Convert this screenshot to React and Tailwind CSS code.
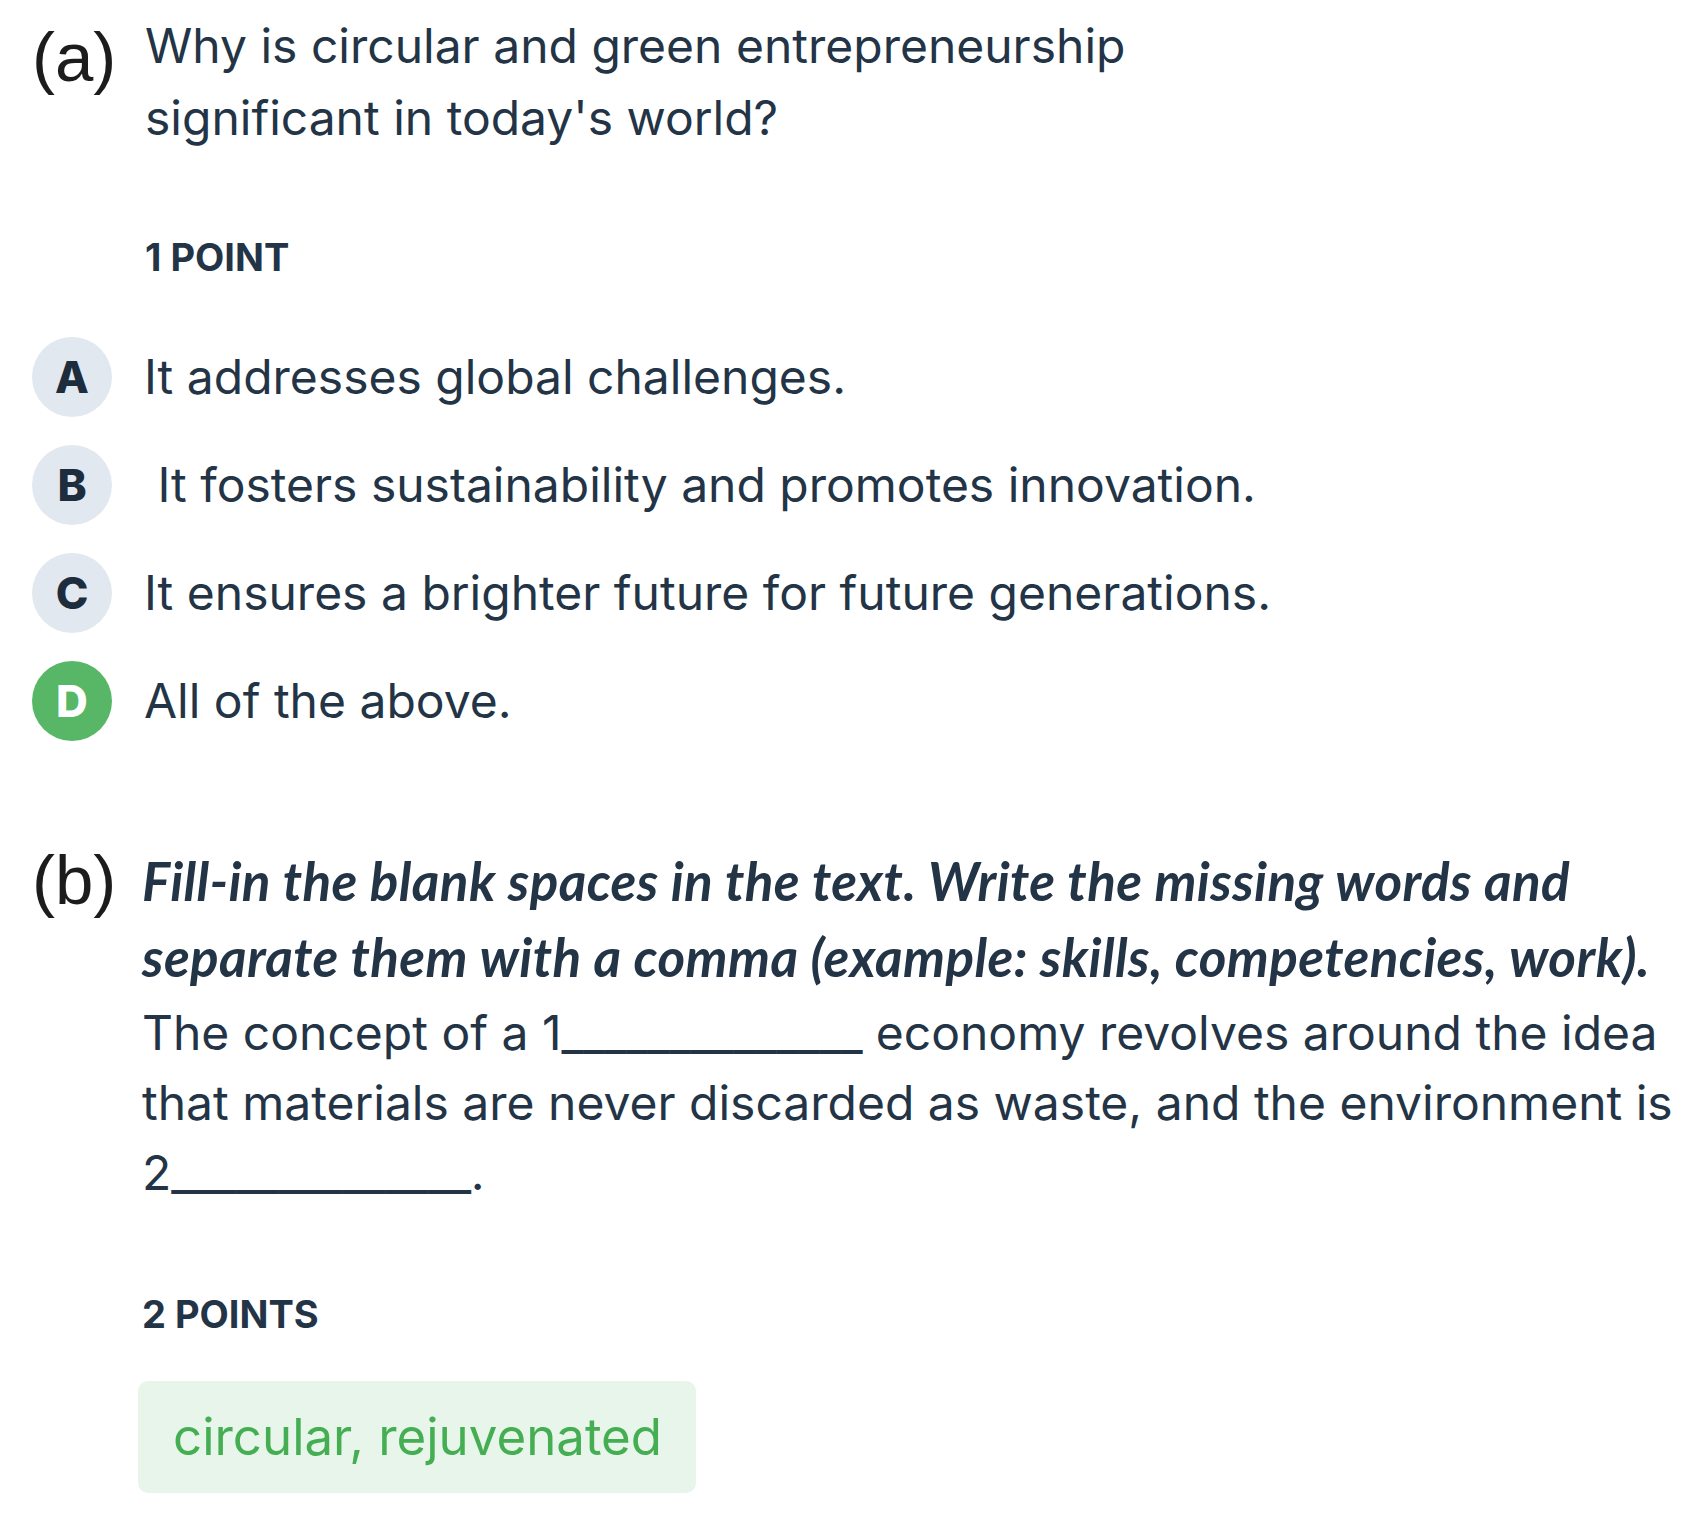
const inter = { fontFamily: 'Inter, "Noto Sans", sans-serif' };

const options = [
  { letter: 'A', text: 'It addresses global challenges.' },
  { letter: 'B', text: '\u00a0It fosters sustainability and promotes innovation.' },
  { letter: 'C', text: 'It ensures a brighter future for future generations.' },
  { letter: 'D', text: 'All of the above.', correct: true },
];

function Label({ children }) {
  return (
    <div className="font-['Liberation_Sans',Arial,sans-serif] text-[69px] leading-none text-[#1c1c1c]">
      {children}
    </div>
  );
}

export default function App() {
  return (
    <div className="min-h-screen bg-white px-[32px] text-[#233446]" style={inter}>
      {/* (a) multiple choice */}
      <div className="flex items-start pt-[10px]">
        <div className="mt-[13px] w-[113px] shrink-0">
          <Label>(a)</Label>
        </div>
        <div className="text-[48px] leading-[72px]">
          Why is circular and green entrepreneurship
          <br />
          significant in today's world?
        </div>
      </div>

      <div className="mt-[81px] pl-[113px] text-[38px] font-bold leading-[1.21]">1 POINT</div>

      <div className="mt-[56px] flex flex-col gap-[28px]">
        {options.map((o) => (
          <div key={o.letter} className="flex items-center">
            <div
              className={`flex h-[80px] w-[80px] shrink-0 items-center justify-center rounded-full text-[44px] font-extrabold ${
                o.correct ? 'bg-[#57b767] text-white' : 'bg-[#e2e8ef] text-[#1e2d3d]'
              }`}
            >
              {o.letter}
            </div>
            <div className="ml-[32px] whitespace-pre text-[48px] leading-[1.21]">{o.text}</div>
          </div>
        ))}
      </div>

      {/* (b) fill in the blanks */}
      <div className="mt-[102px] flex items-start">
        <div className="mt-[3px] w-[110px] shrink-0">
          <Label>(b)</Label>
        </div>
        <div>
          <div className="font-['Lato',sans-serif] text-[53px] font-bold italic leading-[76px] tracking-[0.4px] whitespace-nowrap">
            Fill-in the blank spaces in the text. Write the missing words and
            <br />
            separate them with a comma (example: skills, competencies, work).
          </div>
          <div className="mt-[3px] text-[48px] leading-[70px] whitespace-nowrap">
            The concept of a 1<span className="tracking-[-0.4px]">______________</span> economy revolves around the idea
            <br />
            that materials are never discarded as waste, and the environment is
            <br />
            2<span className="tracking-[-0.5px]">______________</span>.
          </div>
          <div className="mt-[84px] text-[38px] font-bold leading-[1.21]">2 POINTS</div>
          <div className="-ml-[4px] mt-[43px] flex h-[112px] w-[558px] items-center rounded-[10px] bg-[#e7f5ea] pl-[35px]">
            <span className="text-[51px] leading-[1.21] text-[#46ae52]">circular, rejuvenated</span>
          </div>
        </div>
      </div>
    </div>
  );
}
